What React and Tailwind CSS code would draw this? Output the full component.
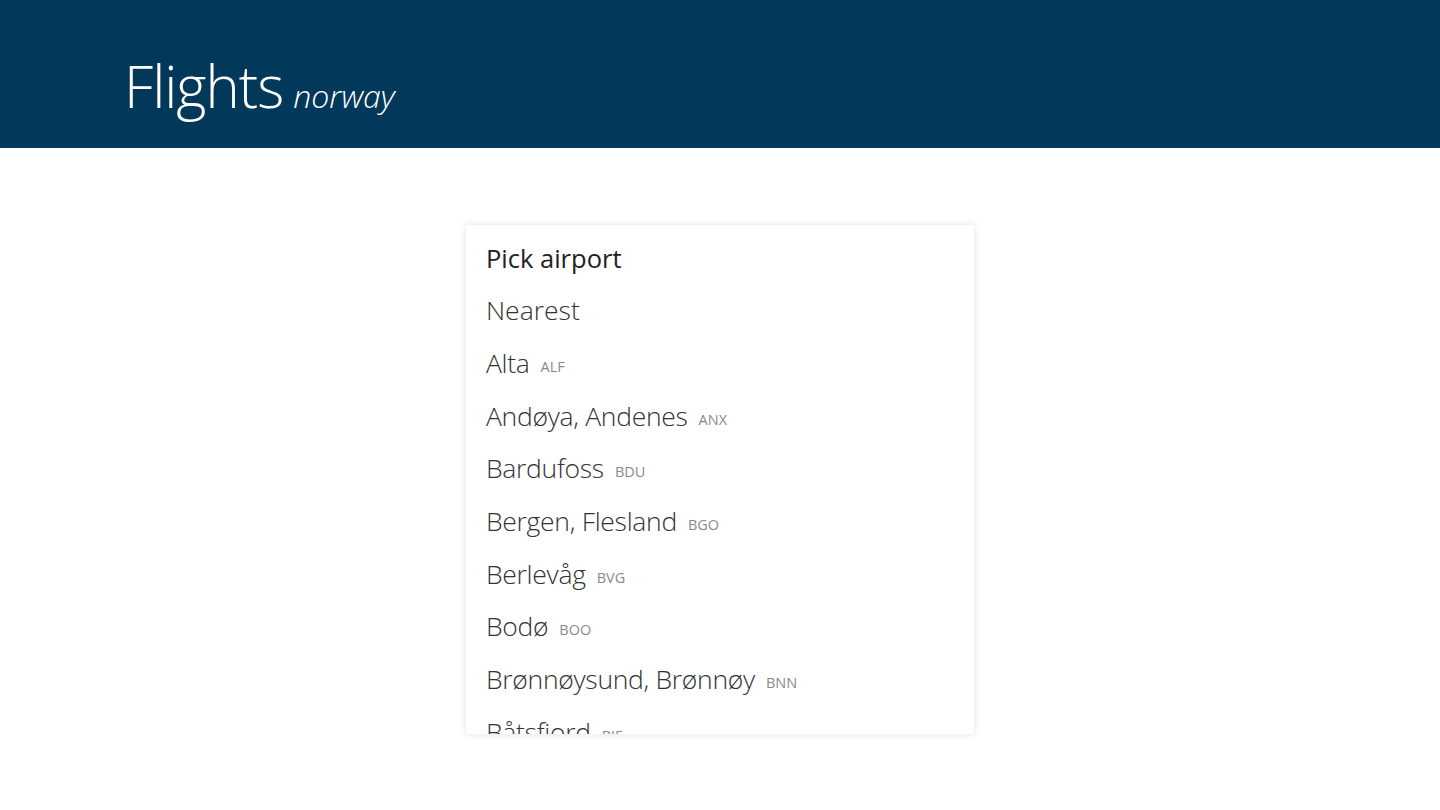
import React from "react";

const airports = [
  { name: "Alta", code: "ALF" },
  { name: "Andøya, Andenes", code: "ANX" },
  { name: "Bardufoss", code: "BDU" },
  { name: "Bergen, Flesland", code: "BGO" },
  { name: "Berlevåg", code: "BVG" },
  { name: "Bodø", code: "BOO" },
  { name: "Brønnøysund, Brønnøy", code: "BNN" },
  { name: "Båtsfjord", code: "BJF" },
];

export default function App() {
  return (
    <div className="min-h-[810px] bg-white font-['Open_Sans','Noto_Sans',sans-serif]">
      <header className="h-[148px] bg-[#02385a] flex items-center pl-[124px]">
        <h1 className="flex items-baseline gap-[10px] text-white font-light mt-[22px]">
          <span className="text-[58px] tracking-[-1px]">Flights</span>
          <span className="text-[32px] italic">norway</span>
        </h1>
      </header>

      <main className="flex justify-center pt-[77px]">
        <div className="w-[508px] h-[509px] overflow-hidden bg-white shadow-[0_0_8px_rgba(0,0,0,0.12)] pt-[7px] pl-[20px]">
          <div className="h-[52.7px] flex items-center text-[25.5px] text-[#222]">Pick airport</div>
          <div className="h-[52.7px] flex items-center text-[26.5px] font-light text-[#333]">Nearest</div>
          {airports.map((a) => (
            <div key={a.code} className="h-[52.7px] flex items-center gap-[11px] text-[#333]">
              <span className="text-[26.5px] font-light tracking-[-0.3px]">{a.name}</span>
              <span className="text-[14.5px] text-[#8a8a8a] pt-[6px]">{a.code}</span>
            </div>
          ))}
        </div>
      </main>
    </div>
  );
}
